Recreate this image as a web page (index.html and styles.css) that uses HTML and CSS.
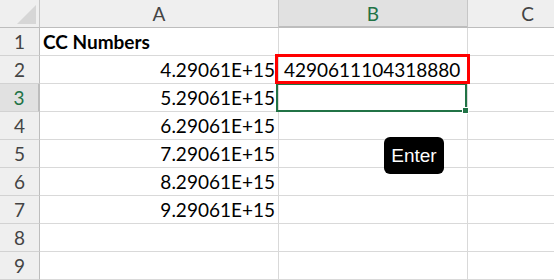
FILE: index.html
```html
<!DOCTYPE html>
<html lang="en">
<head>
    <meta charset="UTF-8">
    <title>CC Numbers</title>
    <link rel="stylesheet" href="styles.css">
</head>
<body>
    <div class="sheet">
        <div class="grid">
            <div class="corner"><span class="tri"></span></div>
            <div class="colhead">A</div>
            <div class="colhead selected">B</div>
            <div class="colhead">C</div>

            <div class="rowhead">1</div>
            <div class="cell bold">CC Numbers</div>
            <div class="cell"></div>
            <div class="cell"></div>

            <div class="rowhead">2</div>
            <div class="cell num">4.29061E+15</div>
            <div class="cell marked">4290611104318880</div>
            <div class="cell"></div>

            <div class="rowhead selected">3</div>
            <div class="cell num">5.29061E+15</div>
            <div class="cell active"><span class="handle"></span></div>
            <div class="cell"></div>

            <div class="rowhead">4</div>
            <div class="cell num">6.29061E+15</div>
            <div class="cell"></div>
            <div class="cell"></div>

            <div class="rowhead">5</div>
            <div class="cell num">7.29061E+15</div>
            <div class="cell"></div>
            <div class="cell"></div>

            <div class="rowhead">6</div>
            <div class="cell num">8.29061E+15</div>
            <div class="cell"></div>
            <div class="cell"></div>

            <div class="rowhead">7</div>
            <div class="cell num">9.29061E+15</div>
            <div class="cell"></div>
            <div class="cell"></div>

            <div class="rowhead">8</div>
            <div class="cell"></div>
            <div class="cell"></div>
            <div class="cell"></div>

            <div class="rowhead">9</div>
            <div class="cell"></div>
            <div class="cell"></div>
            <div class="cell"></div>
        </div>
        <div class="key">Enter</div>
    </div>
</body>
</html>
```

FILE: styles.css
```css
body {
    margin: 0;
    background: #fff;
    font-family: Lato, "Liberation Sans", sans-serif;
    overflow: hidden;
}
.sheet {
    position: relative;
    width: 554px;
    height: 280px;
    overflow: hidden;
}
.grid {
    display: grid;
    grid-template-columns: 40px 239px 189px 120px;
    grid-auto-rows: 28px;
}
.grid > div {
    box-sizing: border-box;
    border-right: 1px solid #d9d9d9;
    border-bottom: 1px solid #d9d9d9;
    font-size: 19px;
    line-height: 27px;
    color: #000;
    white-space: nowrap;
}
.corner {
    position: relative;
    background: #efefef;
    border-right-color: #c6c6c6 !important;
    border-bottom-color: #bdbdbd !important;
}
.tri {
    position: absolute;
    right: 3px;
    bottom: 3px;
    width: 0;
    height: 0;
    border-left: 19px solid transparent;
    border-bottom: 19px solid #d6d6d6;
}
.colhead {
    background: #efefef;
    text-align: center;
    color: #444 !important;
    border-right-color: #c6c6c6 !important;
    border-bottom-color: #bdbdbd !important;
}
.rowhead {
    background: #efefef;
    text-align: center;
    color: #444 !important;
    border-right-color: #bdbdbd !important;
    border-bottom-color: #d2d2d2 !important;
}
.colhead.selected {
    background: #e1e1e1;
    color: #217346 !important;
    border-bottom: 2px solid #217346;
}
.rowhead.selected {
    background: #e1e1e1;
    color: #217346 !important;
    border-right: 2px solid #217346;
}
.cell {
    padding: 0 3px;
}
.num {
    text-align: right;
}
.bold {
    font-weight: bold;
}
.marked {
    position: relative;
    padding-left: 5px;
}
.marked::after {
    content: "";
    position: absolute;
    left: -4px;
    right: -3px;
    top: -2px;
    bottom: -1px;
    border: 3px solid #f00;
    z-index: 2;
}
.active {
    position: relative;
}
.active::after {
    content: "";
    position: absolute;
    left: -3px;
    right: 0;
    top: -1px;
    bottom: -1px;
    border: 2px solid #217346;
    z-index: 1;
}
.handle {
    position: absolute;
    right: -2px;
    bottom: -3px;
    width: 5px;
    height: 5px;
    background: #217346;
    border: 1px solid #fff;
    z-index: 3;
}
.key {
    position: absolute;
    left: 384px;
    top: 137px;
    width: 60px;
    height: 37px;
    background: #000;
    color: #fff;
    border-radius: 6px;
    font-family: "Liberation Sans", sans-serif;
    font-size: 19px;
    line-height: 37px;
    text-align: center;
}
```
